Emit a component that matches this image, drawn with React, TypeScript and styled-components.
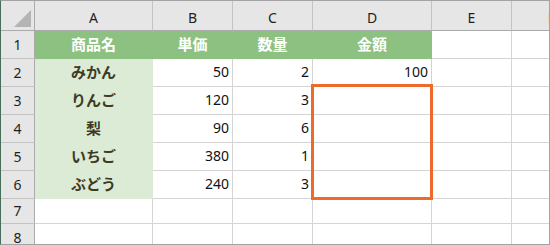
import React from "react";
import styled, { createGlobalStyle } from "styled-components";

const GlobalStyle = createGlobalStyle`
  html, body { margin: 0; padding: 0; background: #ffffff; }
  body { font-family: "Noto Sans", "Noto Sans CJK JP", sans-serif; }
`;

type Fill = "none" | "dark" | "light";

const GRID = "#d4d4d4";
const HEAD_BG = "#e6e6e6";
const HEAD_EDGE = "#ababab";
const HEAD_SEP = "#c3c3c3";
const FILLS: Record<Fill, string> = {
  none: "#ffffff",
  dark: "#8dc181",
  light: "#dcebd6",
};

// Row-header column, then columns A..F; F runs past the window edge.
const COLS = [34, 118, 80, 80, 119, 80, 80];
const ROWS = [30, 28, 28, 28, 28, 28, 28, 25, 28];

const Frame = styled.div`
  position: relative;
  width: 550px;
  height: 245px;
  box-sizing: border-box;
  border: 1px solid #a3a3a3;
  border-left-color: #466e5a;
  overflow: hidden;
  background: #ffffff;
`;

const Sheet = styled.div`
  display: grid;
  grid-template-columns: ${COLS.map((c) => `${c}px`).join(" ")};
  grid-template-rows: ${ROWS.map((r) => `${r}px`).join(" ")};
`;

const Corner = styled.div`
  position: relative;
  box-sizing: border-box;
  background: ${HEAD_BG};
  border-right: 1px solid ${HEAD_EDGE};
  border-bottom: 1px solid ${HEAD_EDGE};
`;

const CornerMark = styled.svg`
  position: absolute;
  right: 3px;
  bottom: 3px;
`;

const ColHead = styled.div`
  box-sizing: border-box;
  background: ${HEAD_BG};
  border-right: 1px solid ${HEAD_SEP};
  border-bottom: 1px solid ${HEAD_EDGE};
  display: flex;
  align-items: flex-end;
  justify-content: center;
  padding-bottom: 4px;
  font-family: "Noto Sans", sans-serif;
  font-size: 14px;
  line-height: 16px;
  color: #1f1f1f;
`;

const RowHead = styled.div`
  box-sizing: border-box;
  background: ${HEAD_BG};
  border-right: 1px solid ${HEAD_EDGE};
  border-bottom: 1px solid ${HEAD_SEP};
  display: flex;
  align-items: center;
  justify-content: center;
  font-family: "Noto Sans", sans-serif;
  font-size: 14px;
  line-height: 16px;
  color: #1f1f1f;
`;

const Cell = styled.div<{
  $fill: Fill;
  $align: "left" | "center" | "right";
  $head?: boolean;
}>`
  box-sizing: border-box;
  background: ${(p) => FILLS[p.$fill]};
  border-right: 1px solid ${(p) => (p.$fill === "none" ? GRID : FILLS[p.$fill])};
  border-bottom: 1px solid ${(p) => (p.$fill === "none" ? GRID : FILLS[p.$fill])};
  display: flex;
  align-items: center;
  justify-content: ${(p) =>
    p.$align === "right" ? "flex-end" : p.$align === "center" ? "center" : "flex-start"};
  padding: 0 3px 1px 3px;
  font-family: ${(p) =>
    p.$fill === "none"
      ? `"Noto Sans", "Noto Sans CJK JP", sans-serif`
      : `"Noto Sans CJK JP", sans-serif`};
  font-size: ${(p) => (p.$fill === "none" ? "14px" : "15px")};
  font-weight: ${(p) => (p.$fill === "none" ? 400 : 700)};
  line-height: 18px;
  color: ${(p) => (p.$head ? "#ffffff" : p.$fill === "light" ? "#3d3b22" : "#111111")};
  white-space: nowrap;
`;

// Orange range outline drawn over D3:D6.
const Selection = styled.div`
  position: absolute;
  left: 310px;
  top: 83px;
  width: 122px;
  height: 116px;
  box-sizing: border-box;
  border: 3px solid #ef6a2a;
  pointer-events: none;
`;

type CellData = { text?: string; fill?: Fill; align?: "left" | "center" | "right"; head?: boolean };

const LETTERS = ["A", "B", "C", "D", "E", "F"];

const items: [string, number, number][] = [
  ["みかん", 50, 2],
  ["りんご", 120, 3],
  ["梨", 90, 6],
  ["いちご", 380, 1],
  ["ぶどう", 240, 3],
];

function buildRows(): CellData[][] {
  const rows: CellData[][] = [];
  rows.push(
    ["商品名", "単価", "数量", "金額"]
      .map<CellData>((t) => ({ text: t, fill: "dark", align: "center", head: true }))
      .concat([{}, {}])
  );
  items.forEach(([name, price, qty], i) => {
    rows.push([
      { text: name, fill: "light", align: "center" },
      { text: String(price), align: "right" },
      { text: String(qty), align: "right" },
      { text: i === 0 ? String(price * qty) : undefined, align: "right" },
      {},
      {},
    ]);
  });
  rows.push([{}, {}, {}, {}, {}, {}]);
  rows.push([{}, {}, {}, {}, {}, {}]);
  return rows;
}

export default function App() {
  const rows = buildRows();
  return (
    <>
      <GlobalStyle />
      <Frame>
        <Sheet>
          <Corner>
            <CornerMark width="17" height="17" viewBox="0 0 17 17">
              <polygon points="17,0 17,17 0,17" fill="#b4b4b4" />
            </CornerMark>
          </Corner>
          {LETTERS.map((l) => (
            <ColHead key={l}>{l}</ColHead>
          ))}
          {rows.map((row, r) => (
            <React.Fragment key={r}>
              <RowHead>{r + 1}</RowHead>
              {row.map((c, ci) => (
                <Cell
                  key={ci}
                  $fill={c.fill ?? "none"}
                  $align={c.align ?? "left"}
                  $head={c.head}
                >
                  {c.text}
                </Cell>
              ))}
            </React.Fragment>
          ))}
        </Sheet>
        <Selection />
      </Frame>
    </>
  );
}
